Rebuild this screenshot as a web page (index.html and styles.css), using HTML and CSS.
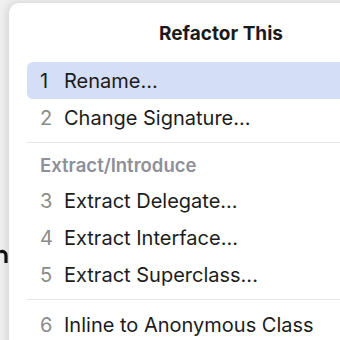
FILE: index.html
```html
<!DOCTYPE html>
<html lang="en">
<head>
  <meta charset="UTF-8">
  <title>Refactor This</title>
  <link rel="stylesheet" href="styles.css">
</head>
<body>

<div class="backdrop">
  <svg class="behind-glyph" width="8" height="16" viewBox="0 0 8 16">
    <path d="M0 3 C3 1.5 6 3 6 7 L6 14" fill="none" stroke="#111" stroke-width="3.2"/>
  </svg>

  <div class="popup">
    <div class="title">Refactor This</div>

    <div class="list">
      <div class="item selected"><span class="num">1</span><span class="label">Rename...</span></div>
      <div class="item"><span class="num">2</span><span class="label">Change Signature...</span></div>

      <div class="separator"></div>
      <div class="group">Extract/Introduce</div>

      <div class="item"><span class="num">3</span><span class="label">Extract Delegate...</span></div>
      <div class="item"><span class="num">4</span><span class="label">Extract Interface...</span></div>
      <div class="item"><span class="num">5</span><span class="label">Extract Superclass...</span></div>

      <div class="separator"></div>

      <div class="item"><span class="num">6</span><span class="label">Inline to Anonymous Class</span></div>
    </div>
  </div>
</div>

</body>
</html>
```

FILE: styles.css
```css
body {
  margin: 0;
  font-family: Inter, "Noto Sans", sans-serif;
  background: #efefef;
  overflow: hidden;
}
.backdrop {
  position: relative;
  height: 340px;
  padding: 3px 0 0 9px;
  box-sizing: border-box;
}
.behind-glyph {
  position: absolute;
  left: 0;
  top: 249px;
}
.popup {
  position: relative;
  width: 424px;
  height: 400px;
  background: #ffffff;
  border-radius: 10px;
  box-shadow: -2px 0 8px rgba(0, 0, 0, 0.12);
}
.title {
  padding: 19px 0 16px;
  line-height: 24px;
  text-align: center;
  font-size: 19px;
  font-weight: 700;
  color: #1a1a1a;
}
.list {
  padding-left: 18px;
}
.item {
  display: flex;
  align-items: center;
  height: 37px;
  padding-left: 13px;
  border-radius: 6px;
  font-size: 20px;
  color: #1c1c1c;
}
.item.selected {
  background: #d4def6;
}
.num {
  width: 24px;
  color: #8b8b8b;
}
.item.selected .num {
  color: #1c1c1c;
}
.separator {
  height: 1px;
  margin: 6px 0;
  background: #e6e6e6;
}
.group {
  height: 33px;
  line-height: 33px;
  padding-left: 13px;
  font-size: 18.5px;
  font-weight: 600;
  color: #8f8f99;
}
```
